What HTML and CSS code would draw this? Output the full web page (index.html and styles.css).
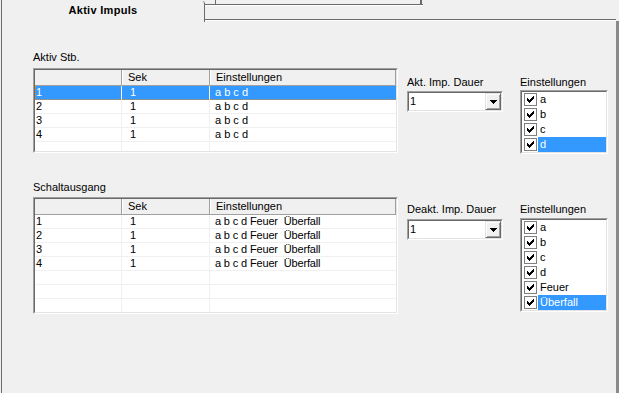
FILE: index.html
```html
<!DOCTYPE html>
<html lang="de">
<head>
<meta charset="utf-8">
<title>Aktiv Impuls</title>
<link rel="stylesheet" href="styles.css">
</head>
<body>
<div class="window">
  <div class="tabs">
    <div class="tab-active">Aktiv Impuls</div>
    <div class="tab-rest"><div class="tab-inactive"></div></div>
  </div>
  <div class="panel">
    <div class="section section-1">
      <div class="col-main">
        <div class="label">Aktiv Stb.</div>
        <div class="grid grid-short"><div class="grid-in">
          <div class="row head"><div class="c c1"></div><div class="c c2">Sek</div><div class="c c3">Einstellungen</div></div>
          <div class="row sel"><div class="c c1">1</div><div class="c c2">1</div><div class="c c3">a b c d</div></div>
          <div class="row"><div class="c c1">2</div><div class="c c2">1</div><div class="c c3">a b c d</div></div>
          <div class="row"><div class="c c1">3</div><div class="c c2">1</div><div class="c c3">a b c d</div></div>
          <div class="row"><div class="c c1">4</div><div class="c c2">1</div><div class="c c3">a b c d</div></div>
          <div class="row"><div class="c c1"></div><div class="c c2"></div><div class="c c3"></div></div>
        </div></div>
      </div>
      <div class="col-combo">
        <div class="label">Akt. Imp. Dauer</div>
        <div class="combo"><div class="combo-in"><span class="combo-value">1</span><span class="combo-btn"><svg width="7" height="4" viewBox="0 0 7 4" shape-rendering="crispEdges"><path d="M0 0h7v1h-1v1h-1v1h-1v1h-1v-1h-1v-1h-1v-1h-1z" fill="#000"/></svg></span></div></div>
      </div>
      <div class="col-list">
        <div class="label">Einstellungen</div>
        <div class="listbox"><div class="listbox-in">
          <div class="item"><span class="cb"><svg width="7" height="7" viewBox="0 0 7 7" shape-rendering="crispEdges"><path d="M6 0h1v1h-1zM5 1h2v1h-2zM0 2h1v1h-1zM4 2h3v1h-3zM0 3h2v1h-2zM3 3h3v1h-3zM0 4h5v1h-5zM1 5h3v1h-3zM2 6h1v1h-1z" fill="#000"/></svg></span><span class="txt">a</span></div>
          <div class="item"><span class="cb"><svg width="7" height="7" viewBox="0 0 7 7" shape-rendering="crispEdges"><path d="M6 0h1v1h-1zM5 1h2v1h-2zM0 2h1v1h-1zM4 2h3v1h-3zM0 3h2v1h-2zM3 3h3v1h-3zM0 4h5v1h-5zM1 5h3v1h-3zM2 6h1v1h-1z" fill="#000"/></svg></span><span class="txt">b</span></div>
          <div class="item"><span class="cb"><svg width="7" height="7" viewBox="0 0 7 7" shape-rendering="crispEdges"><path d="M6 0h1v1h-1zM5 1h2v1h-2zM0 2h1v1h-1zM4 2h3v1h-3zM0 3h2v1h-2zM3 3h3v1h-3zM0 4h5v1h-5zM1 5h3v1h-3zM2 6h1v1h-1z" fill="#000"/></svg></span><span class="txt">c</span></div>
          <div class="item"><span class="cb"><svg width="7" height="7" viewBox="0 0 7 7" shape-rendering="crispEdges"><path d="M6 0h1v1h-1zM5 1h2v1h-2zM0 2h1v1h-1zM4 2h3v1h-3zM0 3h2v1h-2zM3 3h3v1h-3zM0 4h5v1h-5zM1 5h3v1h-3zM2 6h1v1h-1z" fill="#000"/></svg></span><span class="txt hl">d</span></div>
        </div></div>
      </div>
    </div>

    <div class="section section-2">
      <div class="col-main">
        <div class="label">Schaltausgang</div>
        <div class="grid grid-tall"><div class="grid-in">
          <div class="row head"><div class="c c1"></div><div class="c c2">Sek</div><div class="c c3">Einstellungen</div></div>
          <div class="row"><div class="c c1">1</div><div class="c c2">1</div><div class="c c3 long">a b c d Feuer  Überfall</div></div>
          <div class="row"><div class="c c1">2</div><div class="c c2">1</div><div class="c c3 long">a b c d Feuer  Überfall</div></div>
          <div class="row"><div class="c c1">3</div><div class="c c2">1</div><div class="c c3 long">a b c d Feuer  Überfall</div></div>
          <div class="row"><div class="c c1">4</div><div class="c c2">1</div><div class="c c3 long">a b c d Feuer  Überfall</div></div>
          <div class="row"><div class="c c1"></div><div class="c c2"></div><div class="c c3"></div></div>
          <div class="row"><div class="c c1"></div><div class="c c2"></div><div class="c c3"></div></div>
          <div class="row"><div class="c c1"></div><div class="c c2"></div><div class="c c3"></div></div>
        </div></div>
      </div>
      <div class="col-combo">
        <div class="label">Deakt. Imp. Dauer</div>
        <div class="combo"><div class="combo-in"><span class="combo-value">1</span><span class="combo-btn"><svg width="7" height="4" viewBox="0 0 7 4" shape-rendering="crispEdges"><path d="M0 0h7v1h-1v1h-1v1h-1v1h-1v-1h-1v-1h-1v-1h-1z" fill="#000"/></svg></span></div></div>
      </div>
      <div class="col-list">
        <div class="label">Einstellungen</div>
        <div class="listbox"><div class="listbox-in">
          <div class="item"><span class="cb"><svg width="7" height="7" viewBox="0 0 7 7" shape-rendering="crispEdges"><path d="M6 0h1v1h-1zM5 1h2v1h-2zM0 2h1v1h-1zM4 2h3v1h-3zM0 3h2v1h-2zM3 3h3v1h-3zM0 4h5v1h-5zM1 5h3v1h-3zM2 6h1v1h-1z" fill="#000"/></svg></span><span class="txt">a</span></div>
          <div class="item"><span class="cb"><svg width="7" height="7" viewBox="0 0 7 7" shape-rendering="crispEdges"><path d="M6 0h1v1h-1zM5 1h2v1h-2zM0 2h1v1h-1zM4 2h3v1h-3zM0 3h2v1h-2zM3 3h3v1h-3zM0 4h5v1h-5zM1 5h3v1h-3zM2 6h1v1h-1z" fill="#000"/></svg></span><span class="txt">b</span></div>
          <div class="item"><span class="cb"><svg width="7" height="7" viewBox="0 0 7 7" shape-rendering="crispEdges"><path d="M6 0h1v1h-1zM5 1h2v1h-2zM0 2h1v1h-1zM4 2h3v1h-3zM0 3h2v1h-2zM3 3h3v1h-3zM0 4h5v1h-5zM1 5h3v1h-3zM2 6h1v1h-1z" fill="#000"/></svg></span><span class="txt">c</span></div>
          <div class="item"><span class="cb"><svg width="7" height="7" viewBox="0 0 7 7" shape-rendering="crispEdges"><path d="M6 0h1v1h-1zM5 1h2v1h-2zM0 2h1v1h-1zM4 2h3v1h-3zM0 3h2v1h-2zM3 3h3v1h-3zM0 4h5v1h-5zM1 5h3v1h-3zM2 6h1v1h-1z" fill="#000"/></svg></span><span class="txt">d</span></div>
          <div class="item"><span class="cb"><svg width="7" height="7" viewBox="0 0 7 7" shape-rendering="crispEdges"><path d="M6 0h1v1h-1zM5 1h2v1h-2zM0 2h1v1h-1zM4 2h3v1h-3zM0 3h2v1h-2zM3 3h3v1h-3zM0 4h5v1h-5zM1 5h3v1h-3zM2 6h1v1h-1z" fill="#000"/></svg></span><span class="txt">Feuer</span></div>
          <div class="item"><span class="cb"><svg width="7" height="7" viewBox="0 0 7 7" shape-rendering="crispEdges"><path d="M6 0h1v1h-1zM5 1h2v1h-2zM0 2h1v1h-1zM4 2h3v1h-3zM0 3h2v1h-2zM3 3h3v1h-3zM0 4h5v1h-5zM1 5h3v1h-3zM2 6h1v1h-1z" fill="#000"/></svg></span><span class="txt hl">Überfall</span></div>
        </div></div>
      </div>
    </div>
  </div>
</div>
</body>
</html>
```

FILE: styles.css
```css
html, body {
  margin: 0;
  padding: 0;
}
body {
  width: 619px;
  height: 393px;
  overflow: hidden;
  background: #f0f0f0;
  font-family: "Liberation Sans", Arial, sans-serif;
  font-size: 11px;
  color: #000;
}
.window {
  margin-left: 1px;
  border-left: 1px solid #6b6b6b;
  height: 393px;
}

/* tabs */
.tabs {
  display: flex;
  height: 21px;
}
.tab-active {
  box-sizing: border-box;
  width: 203px;
  height: 21px;
  border-right: 1px solid #6b6b6b;
  border-top-right-radius: 3px;
  margin-top: 1px;
  text-align: center;
  font-weight: bold;
  letter-spacing: 0.3px;
  line-height: 13px;
  padding-top: 3px;
}
.tab-rest {
  flex: 1;
  box-sizing: border-box;
  height: 21px;
  margin-right: 3px;
  border-bottom: 1px solid #ffffff;
  box-shadow: inset 0 -1px 0 #6b6b6b;
}
.tab-inactive {
  position: relative;
  box-sizing: border-box;
  width: 218px;
  height: 15px;
  margin-top: 4px;
  border-top: 1px solid #6b6b6b;
  box-shadow: inset 0 1px 0 #ffffff;
}
.tab-inactive::before {
  content: "";
  position: absolute;
  left: 10px;
  top: -5px;
  width: 204px;
  height: 4px;
  border-left: 1px solid #6b6b6b;
  border-right: 2px solid #6b6b6b;
}

/* panel */
.panel {
  box-sizing: border-box;
  height: 372px;
  border-right: 3px solid #8a8a8a;
  padding: 30px 0 0 31px;
}
.section {
  display: flex;
  align-items: flex-start;
}
.section-2 {
  margin-top: 27px;
}
.label {
  height: 13px;
  line-height: 13px;
  white-space: nowrap;
}
.col-main {
  width: 365px;
}
.col-main .label {
  margin-bottom: 4px;
}
.section-2 .col-main .label {
  margin-bottom: 3px;
}
.col-combo {
  margin-left: 9px;
  width: 96px;
  padding-top: 25px;
}
.col-combo .label {
  margin-bottom: 2px;
}
.section-2 .col-combo {
  padding-top: 22px;
}
.section-2 .col-combo .label {
  margin-bottom: 3px;
}
.col-list {
  margin-left: 17px;
  width: 88px;
  padding-top: 25px;
}
.col-list .label {
  margin-bottom: 1px;
}
.section-2 .col-list {
  padding-top: 22px;
}
.section-2 .col-list .label {
  margin-bottom: 2px;
}

/* grid */
.grid {
  box-sizing: border-box;
  width: 365px;
  border: 1px solid;
  border-color: #a0a0a0 #ffffff #ffffff #a0a0a0;
}
.grid-short { height: 85px; }
.grid-tall { height: 117px; }
.grid-in {
  box-sizing: border-box;
  height: 100%;
  border: 1px solid;
  border-color: #696969 #e3e3e3 #e3e3e3 #696969;
  background: #ffffff;
  overflow: hidden;
}
.row {
  display: flex;
  height: 14px;
  line-height: 13px;
}
.c {
  box-sizing: border-box;
  height: 14px;
  border-right: 1px solid #f0f0f0;
  border-bottom: 1px solid #f0f0f0;
  white-space: pre;
  overflow: hidden;
}
.c1 { width: 87px; padding-left: 1px; }
.c2 { width: 88px; padding-left: 8px; }
.c3 { flex: 1; padding-left: 5px; border-right: none; }
.long { letter-spacing: -0.15px; }

.row.head {
  height: 16px;
  line-height: 15px;
}
.head .c {
  height: 16px;
  background: #f0f0f0;
  border-right: 1px solid #a0a0a0;
  border-bottom: 1px solid #a0a0a0;
  box-shadow: inset 1px 0 0 #ffffff;
  padding-left: 6px;
}
.head .c1 { box-shadow: none; }

.row.sel .c {
  background: #3399ff;
  color: #ffffff;
  border-right-color: #ffffff;
  border-bottom: 1px dotted #e0892a;
}
.row.sel .c1 {
  border-left: 1px dotted #e0892a;
  padding-left: 0;
}
.row.sel .c3 { border-right: none; }

/* combo */
.combo {
  box-sizing: border-box;
  width: 96px;
  height: 21px;
  border: 1px solid;
  border-color: #a0a0a0 #ffffff #ffffff #a0a0a0;
}
.combo-in {
  box-sizing: border-box;
  display: flex;
  height: 19px;
  border: 1px solid;
  border-color: #696969 #e3e3e3 #e3e3e3 #696969;
  background: #ffffff;
}
.combo-value {
  flex: 1;
  line-height: 17px;
  padding-left: 1px;
}
.combo-btn {
  box-sizing: border-box;
  width: 16px;
  height: 17px;
  border: 1px solid;
  border-color: #e3e3e3 #696969 #696969 #e3e3e3;
  box-shadow: inset 1px 1px 0 #ffffff, inset -1px -1px 0 #a0a0a0;
  background: #f0f0f0;
  display: flex;
  align-items: center;
  justify-content: center;
}
.combo-btn svg { display: block; }

/* listbox */
.listbox {
  box-sizing: border-box;
  width: 88px;
  border: 1px solid;
  border-color: #a0a0a0 #ffffff #ffffff #a0a0a0;
}
.listbox-in {
  border: 1px solid;
  border-color: #696969 #e3e3e3 #e3e3e3 #696969;
  background: #ffffff;
}
.item {
  display: flex;
  align-items: center;
  height: 15px;
}
.cb {
  box-sizing: border-box;
  width: 13px;
  height: 13px;
  margin-left: 2px;
  border: 1px solid #7f7f7f;
  background: #ffffff;
  display: flex;
  align-items: center;
  justify-content: center;
}
.cb svg { display: block; }
.txt {
  flex: 1;
  height: 15px;
  line-height: 15px;
  margin-left: 1px;
  padding-left: 2px;
  white-space: nowrap;
}
.txt.hl {
  background: #3399ff;
  color: #ffffff;
}
```
